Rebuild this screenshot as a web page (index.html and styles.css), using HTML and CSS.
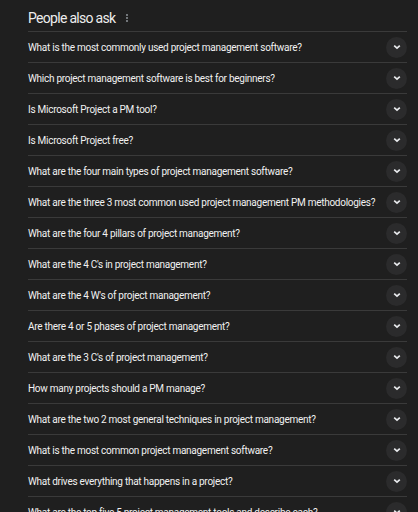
FILE: index.html
```html
<!DOCTYPE html>
<html>
<head>
<meta charset="utf-8">
<link rel="stylesheet" href="styles.css">
</head>
<body>
<div class="paa">
  <div class="head">
    <span class="title">People also ask</span>
    <svg class="more" width="4" height="10" viewBox="0 0 4 10"><circle cx="2" cy="2" r="0.9" fill="#9aa0a6"/><circle cx="2" cy="5" r="0.9" fill="#9aa0a6"/><circle cx="2" cy="8" r="0.9" fill="#9aa0a6"/></svg>
  </div>
  <div class="list">
    <div class="row"><span class="q">What is the most commonly used project management software?</span><span class="btn"><svg width="10" height="10" viewBox="0 0 10 10"><path d="M2.2 3.6 L5 6.2 L7.8 3.6" fill="none" stroke="#e8eaed" stroke-width="1.7"/></svg></span></div>
    <div class="row"><span class="q">Which project management software is best for beginners?</span><span class="btn"><svg width="10" height="10" viewBox="0 0 10 10"><path d="M2.2 3.6 L5 6.2 L7.8 3.6" fill="none" stroke="#e8eaed" stroke-width="1.7"/></svg></span></div>
    <div class="row"><span class="q">Is Microsoft Project a PM tool?</span><span class="btn"><svg width="10" height="10" viewBox="0 0 10 10"><path d="M2.2 3.6 L5 6.2 L7.8 3.6" fill="none" stroke="#e8eaed" stroke-width="1.7"/></svg></span></div>
    <div class="row"><span class="q">Is Microsoft Project free?</span><span class="btn"><svg width="10" height="10" viewBox="0 0 10 10"><path d="M2.2 3.6 L5 6.2 L7.8 3.6" fill="none" stroke="#e8eaed" stroke-width="1.7"/></svg></span></div>
    <div class="row"><span class="q">What are the four main types of project management software?</span><span class="btn"><svg width="10" height="10" viewBox="0 0 10 10"><path d="M2.2 3.6 L5 6.2 L7.8 3.6" fill="none" stroke="#e8eaed" stroke-width="1.7"/></svg></span></div>
    <div class="row"><span class="q">What are the three 3 most common used project management PM methodologies?</span><span class="btn"><svg width="10" height="10" viewBox="0 0 10 10"><path d="M2.2 3.6 L5 6.2 L7.8 3.6" fill="none" stroke="#e8eaed" stroke-width="1.7"/></svg></span></div>
    <div class="row"><span class="q">What are the four 4 pillars of project management?</span><span class="btn"><svg width="10" height="10" viewBox="0 0 10 10"><path d="M2.2 3.6 L5 6.2 L7.8 3.6" fill="none" stroke="#e8eaed" stroke-width="1.7"/></svg></span></div>
    <div class="row"><span class="q">What are the 4 C's in project management?</span><span class="btn"><svg width="10" height="10" viewBox="0 0 10 10"><path d="M2.2 3.6 L5 6.2 L7.8 3.6" fill="none" stroke="#e8eaed" stroke-width="1.7"/></svg></span></div>
    <div class="row"><span class="q">What are the 4 W's of project management?</span><span class="btn"><svg width="10" height="10" viewBox="0 0 10 10"><path d="M2.2 3.6 L5 6.2 L7.8 3.6" fill="none" stroke="#e8eaed" stroke-width="1.7"/></svg></span></div>
    <div class="row"><span class="q">Are there 4 or 5 phases of project management?</span><span class="btn"><svg width="10" height="10" viewBox="0 0 10 10"><path d="M2.2 3.6 L5 6.2 L7.8 3.6" fill="none" stroke="#e8eaed" stroke-width="1.7"/></svg></span></div>
    <div class="row"><span class="q">What are the 3 C's of project management?</span><span class="btn"><svg width="10" height="10" viewBox="0 0 10 10"><path d="M2.2 3.6 L5 6.2 L7.8 3.6" fill="none" stroke="#e8eaed" stroke-width="1.7"/></svg></span></div>
    <div class="row"><span class="q">How many projects should a PM manage?</span><span class="btn"><svg width="10" height="10" viewBox="0 0 10 10"><path d="M2.2 3.6 L5 6.2 L7.8 3.6" fill="none" stroke="#e8eaed" stroke-width="1.7"/></svg></span></div>
    <div class="row"><span class="q">What are the two 2 most general techniques in project management?</span><span class="btn"><svg width="10" height="10" viewBox="0 0 10 10"><path d="M2.2 3.6 L5 6.2 L7.8 3.6" fill="none" stroke="#e8eaed" stroke-width="1.7"/></svg></span></div>
    <div class="row"><span class="q">What is the most common project management software?</span><span class="btn"><svg width="10" height="10" viewBox="0 0 10 10"><path d="M2.2 3.6 L5 6.2 L7.8 3.6" fill="none" stroke="#e8eaed" stroke-width="1.7"/></svg></span></div>
    <div class="row"><span class="q">What drives everything that happens in a project?</span><span class="btn"><svg width="10" height="10" viewBox="0 0 10 10"><path d="M2.2 3.6 L5 6.2 L7.8 3.6" fill="none" stroke="#e8eaed" stroke-width="1.7"/></svg></span></div>
    <div class="row"><span class="q">What are the top five 5 project management tools and describe each?</span><span class="btn"><svg width="10" height="10" viewBox="0 0 10 10"><path d="M2.2 3.6 L5 6.2 L7.8 3.6" fill="none" stroke="#e8eaed" stroke-width="1.7"/></svg></span></div>
  </div>
</div>
</body>
</html>
```
FILE: styles.css
```css
html, body {
  margin: 0;
  padding: 0;
  background: #1f1f1f;
  height: 100%;
  overflow: hidden;
}
.paa {
  padding: 0 11px 0 28px;
  font-family: Roboto, "Liberation Sans", sans-serif;
  color: #e8eaed;
}
.head {
  height: 31px;
  display: flex;
  align-items: center;
  gap: 10px;
  padding-top: 5px;
  box-sizing: border-box;
}
.title {
  font-size: 14px;
  letter-spacing: -0.7px;
  color: #ededed;
}
.more {
  display: block;
}
.row {
  height: 31px;
  border-top: 1px solid #3a3a3a;
  box-sizing: border-box;
  display: flex;
  align-items: center;
  justify-content: space-between;
}
.q {
  font-size: 10px;
  letter-spacing: -0.27px;
  white-space: nowrap;
  color: #f1f1f1;
}
.btn {
  width: 21px;
  height: 21px;
  border-radius: 50%;
  background: #2b2b2c;
  display: flex;
  align-items: center;
  justify-content: center;
  flex-shrink: 0;
}
.btn svg {
  display: block;
}
```
